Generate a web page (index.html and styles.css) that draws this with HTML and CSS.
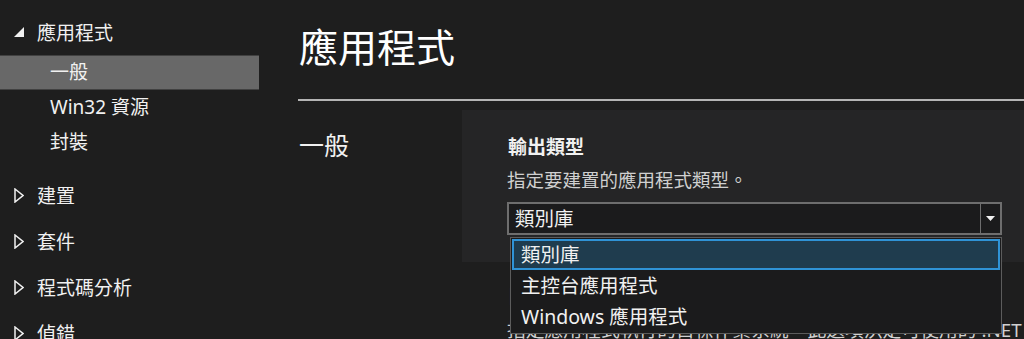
FILE: index.html
```html
<!DOCTYPE html>
<html lang="zh-Hant">
<head>
<meta charset="utf-8">
<link rel="stylesheet" href="styles.css">
<title>專案屬性</title>
</head>
<body>
<div class="page">
  <nav class="tree">
    <div class="node open">
      <svg class="twisty" width="10" height="10" viewBox="0 0 10 10"><polygon points="10,0 10,10 0,10" fill="#f1f1f1"/></svg>
      <span>應用程式</span>
    </div>
    <div class="leaf selected">一般</div>
    <div class="leaf">Win32 資源</div>
    <div class="leaf">封裝</div>
    <div class="groups">
      <div class="node">
        <svg class="twisty" width="10" height="15" viewBox="0 0 10 15"><polygon points="1,1 9,7.5 1,14" fill="none" stroke="#f1f1f1" stroke-width="1.5"/></svg>
        <span>建置</span>
      </div>
      <div class="node">
        <svg class="twisty" width="10" height="15" viewBox="0 0 10 15"><polygon points="1,1 9,7.5 1,14" fill="none" stroke="#f1f1f1" stroke-width="1.5"/></svg>
        <span>套件</span>
      </div>
      <div class="node">
        <svg class="twisty" width="10" height="15" viewBox="0 0 10 15"><polygon points="1,1 9,7.5 1,14" fill="none" stroke="#f1f1f1" stroke-width="1.5"/></svg>
        <span>程式碼分析</span>
      </div>
      <div class="node">
        <svg class="twisty" width="10" height="15" viewBox="0 0 10 15"><polygon points="1,1 9,7.5 1,14" fill="none" stroke="#f1f1f1" stroke-width="1.5"/></svg>
        <span>偵錯</span>
      </div>
    </div>
  </nav>

  <main class="content">
    <h1 class="title">應用程式</h1>
    <div class="rule"></div>
    <section class="row">
      <h2 class="label">一般</h2>
      <div class="settings">
        <div class="setting active">
          <div class="name">輸出類型</div>
          <div class="desc">指定要建置的應用程式類型。</div>
          <div class="combo">
            <div class="combo-box">
              <span class="value">類別庫</span>
              <span class="arrow"><svg width="9" height="5" viewBox="0 0 9 5"><polygon points="0,0 9,0 4.5,5" fill="#f1f1f1"/></svg></span>
            </div>
            <ul class="options">
              <li class="option current">類別庫</li>
              <li class="option">主控台應用程式</li>
              <li class="option">Windows 應用程式</li>
            </ul>
          </div>
        </div>
        <div class="setting">
          <div class="name">目標 OS</div>
          <div class="desc">指定應用程式執行的目標作業系統，此選項決定可使用的 .NET</div>
        </div>
      </div>
    </section>
  </main>
</div>
</body>
</html>
```

FILE: styles.css
```css
*{margin:0;padding:0;box-sizing:border-box;}
body{background:#1e1e1e;color:#f1f1f1;font-family:"Noto Sans","Noto Sans CJK TC",sans-serif;overflow:hidden;}
.page{display:flex;height:339px;overflow:hidden;}

/* tree */
.tree{width:259px;flex:none;padding-top:15px;font-size:19px;}
.node{display:flex;align-items:center;height:34px;padding-left:14px;}
.node .twisty{flex:none;margin-right:13px;}
.tree > .node{margin-bottom:6px;}
.leaf{height:35px;line-height:35px;padding-left:50px;}
.leaf.selected{background:#686868;border-top:1px solid #414141;border-bottom:1px solid #414141;line-height:33px;}
.groups{margin-top:12px;}
.groups .node{height:46px;}

/* content */
.content{flex:1;margin-left:39px;min-width:0;}
.title{font-size:39px;font-weight:normal;line-height:46px;margin-top:24px;padding-left:1px;color:#fff;}
.rule{height:2px;background:#b4b4b4;margin-top:29px;}
.row{display:flex;margin-top:9px;}
.label{width:164px;flex:none;font-size:25px;font-weight:normal;line-height:32px;padding:19px 0 0 1px;}
.settings{flex:1;min-width:0;}
.setting{padding:24px 0 27px 45px;}
.setting.active{background:#252526;}
.name{font-size:19px;font-weight:bold;line-height:26px;padding-left:1px;}
.desc{font-size:18.5px;line-height:26px;margin-top:7px;color:#d0d0d0;white-space:nowrap;}
.setting + .setting{padding-top:22px;}
.setting + .setting .desc{font-size:18.8px;}

/* combo */
.combo{position:relative;margin-top:9px;width:495px;}
.combo-box{display:flex;height:33px;background:#1b1b1c;border:2px solid #6e6e6e;}
.combo-box .value{flex:1;font-size:19.5px;line-height:29px;padding-left:6px;}
.combo-box .arrow{width:20px;flex:none;border-left:1px solid #6e6e6e;display:flex;align-items:center;justify-content:center;}
.options{position:absolute;z-index:5;top:35px;left:3px;right:0;list-style:none;background:#1b1b1c;border:1px solid #5c5c5c;padding:1px;}
.option{height:31px;line-height:29px;font-size:19.5px;padding-left:8px;border:1px solid transparent;}
.option.current{background:#1f3c4e;border:2px solid #2f93d6;line-height:27px;padding-left:7px;}
```
